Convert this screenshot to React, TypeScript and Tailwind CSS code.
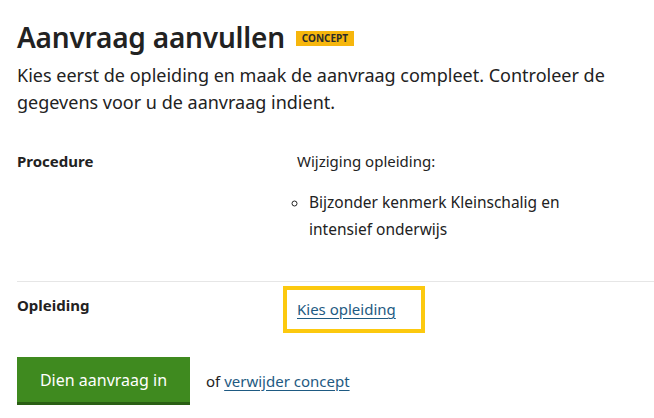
export default function App() {
  return (
    <div className="min-h-screen bg-white text-[#222] font-['Noto_Sans',sans-serif] px-[17px] pt-[17px]">
      {/* Title */}
      <div className="flex items-center gap-[11px]">
        <h1 className="text-[28px] leading-[40px] font-semibold tracking-[-0.2px] text-[#222]">
          Aanvraag aanvullen
        </h1>
        <span className="mt-[3px] bg-[#f6b60d] px-[6px] text-[10px] leading-[15px] font-bold text-[#2b2b2b]">
          CONCEPT
        </span>
      </div>
      <p className="mt-[5px] text-[18px] leading-[27px] text-[#222]">
        Kies eerst de opleiding en maak de aanvraag compleet. Controleer de gegevens voor u de aanvraag indient.
      </p>

      {/* Details */}
      <dl className="mt-[32px] -mr-[17px]">
        <div className="grid grid-cols-[280px_1fr] pb-[38px] border-b border-[#e6e6e6]">
          <dt className="text-[15px] leading-[27px] font-bold">Procedure</dt>
          <dd className="text-[15px] leading-[27px] max-w-[296px]">
            <p>Wijziging opleiding:</p>
            <ul className="mt-[14px] list-[circle] pl-[11px] marker:text-[13px]">
              <li className="pl-[1px] text-[15.5px]">Bijzonder kenmerk Kleinschalig en intensief onderwijs</li>
            </ul>
          </dd>
        </div>
        <div className="grid grid-cols-[280px_1fr] pt-[4px]">
          <dt className="pt-[6px] text-[15px] leading-[27px] font-bold">Opleiding</dt>
          <dd className="-ml-[14px]">
            <div className="inline-block w-[142px] border-[4px] border-[#fcc90f] px-[10px] py-[6px]">
              <a href="#" className="text-[15px] leading-[27px] text-[#1e5a82] underline underline-offset-[3px]">
                Kies opleiding
              </a>
            </div>
          </dd>
        </div>
      </dl>

      {/* Actions */}
      <div className="mt-[24px] flex items-center gap-[16px]">
        <button className="h-[48px] w-[173px] bg-[#3f8a1f] border-b-[3px] border-[#2a5f14] text-white text-[16px]">
          Dien aanvraag in
        </button>
        <span className="text-[15px] leading-[27px]">
          of{" "}
          <a href="#" className="text-[#1e5a82] underline underline-offset-[3px]">
            verwijder concept
          </a>
        </span>
      </div>
    </div>
  );
}
